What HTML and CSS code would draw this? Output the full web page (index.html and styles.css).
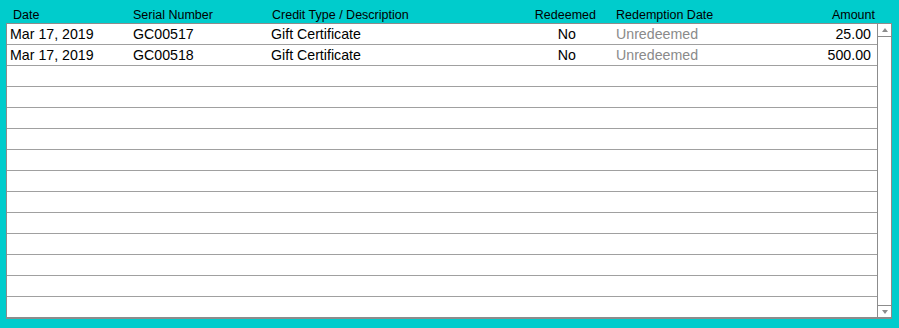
FILE: index.html
```html
<!DOCTYPE html>
<html lang="en">
  <head>
    <meta charset="UTF-8" />
    <title>Credits</title>
    <link rel="stylesheet" href="styles.css">
  </head>
  <body>
    <div id="panel">
      <!-- column titles -->
      <div class="cols head">
        <div class="c-date">Date</div>
        <div class="c-serial">Serial Number</div>
        <div class="c-desc">Credit Type / Description</div>
        <div class="c-red">Redeemed</div>
        <div class="c-rdate">Redemption Date</div>
        <div class="c-amt">Amount</div>
      </div>
      <div id="list">
        <div id="rows">
          <div class="cols row">
            <div class="c-date">Mar 17, 2019</div>
            <div class="c-serial">GC00517</div>
            <div class="c-desc">Gift Certificate</div>
            <div class="c-red">No</div>
            <div class="c-rdate">Unredeemed</div>
            <div class="c-amt">25.00</div>
          </div>
          <div class="cols row">
            <div class="c-date">Mar 17, 2019</div>
            <div class="c-serial">GC00518</div>
            <div class="c-desc">Gift Certificate</div>
            <div class="c-red">No</div>
            <div class="c-rdate">Unredeemed</div>
            <div class="c-amt">500.00</div>
          </div>
          <div class="row"></div>
          <div class="row"></div>
          <div class="row"></div>
          <div class="row"></div>
          <div class="row"></div>
          <div class="row"></div>
          <div class="row"></div>
          <div class="row"></div>
          <div class="row"></div>
          <div class="row"></div>
          <div class="row"></div>
          <div class="row"></div>
        </div>
        <div id="scroll">
          <div class="arrow up"></div>
          <div class="track"></div>
          <div class="arrow down"></div>
        </div>
      </div>
    </div>
  </body>
</html>
```

FILE: styles.css
```css
html, body {
  margin: 0;
  height: 100%;
}
body {
  background-color: #00cccc;
  font-family: "Liberation Sans", Arial, sans-serif;
  color: #000;
}

#panel {
  padding: 0 7px 0 6px;
}

.cols {
  display: grid;
  grid-template-columns: 126px 138px 249px 80px 160px 117px;
  white-space: nowrap;
}

/* column titles above the list */
.head {
  height: 16px;
  padding: 7px 0 0 1px;
  font-size: 12.5px;
  line-height: 16px;
}
.head .c-date { padding-left: 6px; }
.head .c-desc { padding-left: 1px; }
.head .c-red { text-align: right; padding-right: 4px; }
.head .c-rdate { padding-left: 16px; }
.head .c-amt { text-align: right; padding-right: 2px; }

#list {
  display: flex;
  border: 1px solid #8c8c8c;
  border-bottom: 2px solid #8c8c8c;
  background: #fff;
  height: 293px;
}

#rows {
  flex-grow: 1;
}

.row {
  height: 20px;
  border-bottom: 1px solid #a0a0a0;
  font-size: 14.2px;
  line-height: 20px;
}
.row:last-child {
  border-bottom: none;
}
.row .c-date { padding-left: 3px; }
.row .c-red { text-align: right; padding-right: 24px; }
.row .c-rdate { padding-left: 16px; color: #8a8a8a; }
.row .c-amt { text-align: right; padding-right: 6px; }

/* vertical scroll bar */
#scroll {
  width: 13px;
  border-left: 1px solid #8c8c8c;
  display: flex;
  flex-direction: column;
}
#scroll .track {
  flex-grow: 1;
}
.arrow {
  height: 12px;
  display: flex;
  justify-content: center;
  align-items: center;
}
.arrow.up {
  border-bottom: 1px solid #8c8c8c;
}
.arrow.down {
  height: 11px;
  border-top: 1px solid #8c8c8c;
}
.arrow::after {
  content: "";
  border-left: 3px solid transparent;
  border-right: 3px solid transparent;
}
.arrow.up::after {
  border-bottom: 4px solid #8c8c8c;
}
.arrow.down::after {
  border-top: 4px solid #8c8c8c;
}
```
